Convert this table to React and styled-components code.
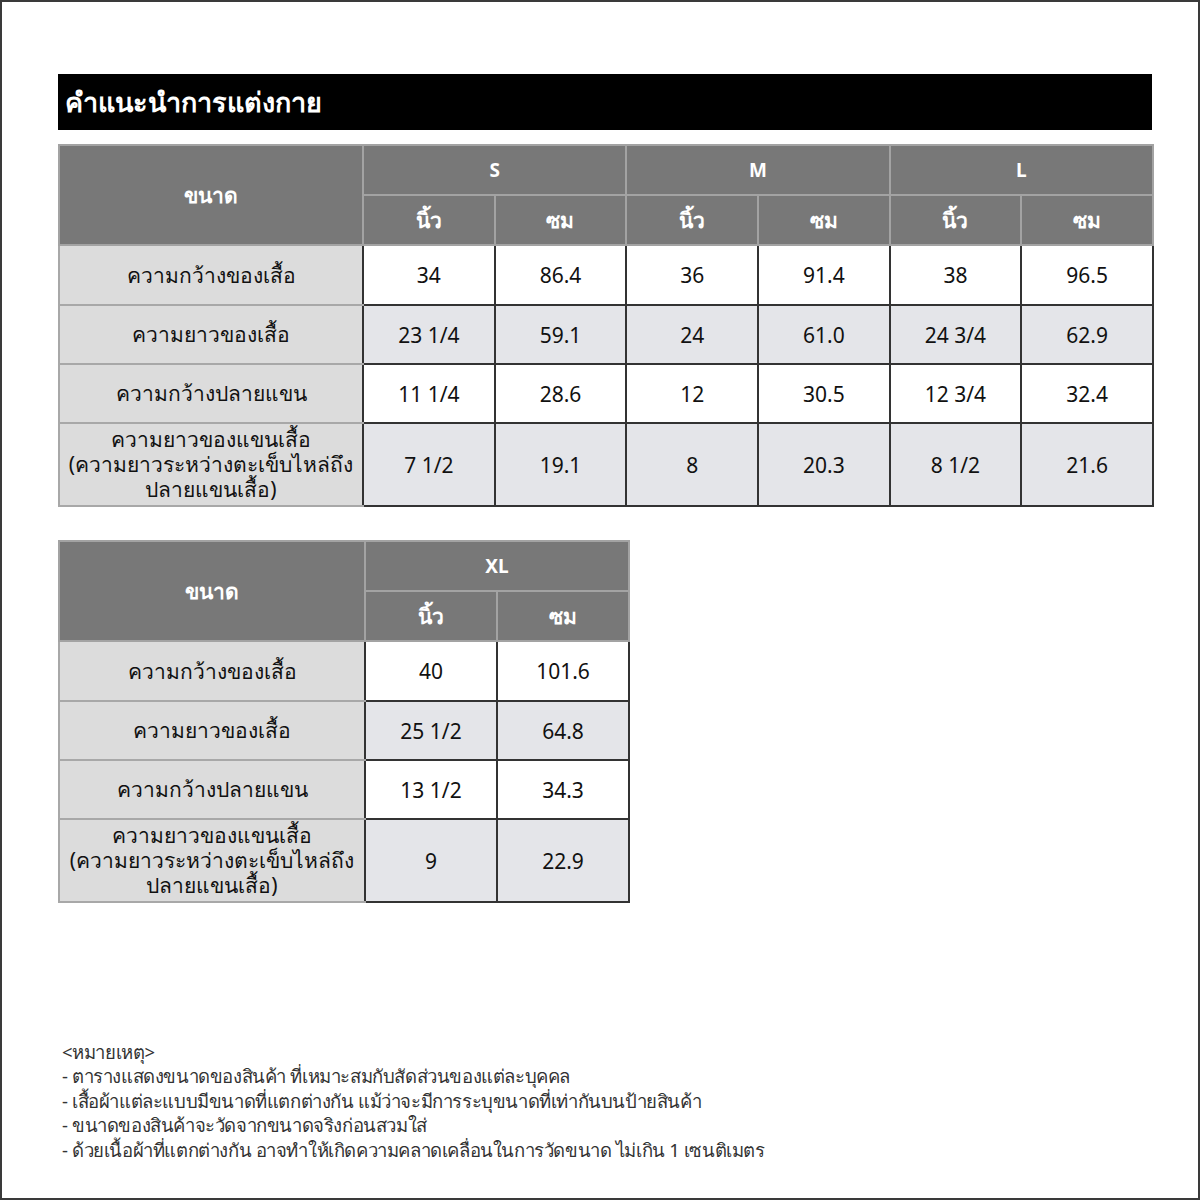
import React from "react";
import styled, { createGlobalStyle } from "styled-components";

const GlobalStyle = createGlobalStyle`
  html, body { margin: 0; padding: 0; background: #fff; }
  body { font-family: "Noto Sans", "DejaVu Sans", sans-serif; color: #111; }
`;

const Page = styled.div`
  width: 1200px;
  height: 1200px;
  box-sizing: border-box;
  border: 2px solid #3a3a3a;
  padding: 72px 46px 0 56px;
  display: flex;
  flex-direction: column;
`;

const TitleBar = styled.div`
  height: 56px;
  background: #000;
  color: #fff;
  font-size: 27px;
  font-weight: 600;
  display: flex;
  align-items: center;
  padding-left: 7px;
  margin-bottom: 14px;
`;

const Table = styled.table`
  border-collapse: collapse;
  table-layout: fixed;
  width: ${(p) => p.$width}px;
  margin-bottom: ${(p) => p.$gap || 0}px;
  border: 2px solid #a8a8a8;
`;

const HeadCell = styled.th`
  background: #787878;
  color: #fff;
  font-weight: 700;
  font-size: ${(p) => (p.$small ? 19 : 21)}px;
  height: ${(p) => p.$h || 50}px;
  padding: 0;
  text-align: center;
  border: 2px solid #a3a3a3;
  box-sizing: border-box;
`;

const LabelCell = styled.td`
  background: #dcdcdc;
  font-size: 21px;
  line-height: 25px;
  text-align: center;
  height: ${(p) => p.$h}px;
  padding: 0 4px;
  border: 2px solid #a8a8a8;
  border-right: 2px solid #333;
  box-sizing: border-box;
  white-space: pre-line;
`;

const DataCell = styled.td`
  background: ${(p) => (p.$alt ? "#e4e5e9" : "#fff")};
  font-size: 21px;
  text-align: center;
  padding: 0;
  border: 2px solid #333;
  box-sizing: border-box;
`;

const Notes = styled.div`
  margin-top: auto;
  margin-bottom: 36px;
  padding-left: 4px;
  font-size: 18.5px;
  line-height: 24.5px;
  color: #333;
  letter-spacing: -0.4px;
`;

const rowLabels = [
  { text: "ความกว้างของเสื้อ", h: 60 },
  { text: "ความยาวของเสื้อ", h: 59 },
  { text: "ความกว้างปลายแขน", h: 59 },
  { text: "ความยาวของแขนเสื้อ\n(ความยาวระหว่างตะเข็บไหล่ถึง\nปลายแขนเสื้อ)", h: 83 },
];

const sizes = {
  S: [["34", "86.4"], ["23 1/4", "59.1"], ["11 1/4", "28.6"], ["7 1/2", "19.1"]],
  M: [["36", "91.4"], ["24", "61.0"], ["12", "30.5"], ["8", "20.3"]],
  L: [["38", "96.5"], ["24 3/4", "62.9"], ["12 3/4", "32.4"], ["8 1/2", "21.6"]],
  XL: [["40", "101.6"], ["25 1/2", "64.8"], ["13 1/2", "34.3"], ["9", "22.9"]],
};

function SizeTable({ keys, width, labelWidth, gap }) {
  const dataWidth = (width - labelWidth) / (keys.length * 2);
  return (
    <Table $width={width} $gap={gap}>
      <colgroup>
        <col style={{ width: labelWidth }} />
        {keys.flatMap((k) => [
          <col key={k + "a"} style={{ width: dataWidth }} />,
          <col key={k + "b"} style={{ width: dataWidth }} />,
        ])}
      </colgroup>
      <thead>
        <tr>
          <HeadCell rowSpan={2} $h={100}>ขนาด</HeadCell>
          {keys.map((k) => (
            <HeadCell key={k} colSpan={2} $small>{k}</HeadCell>
          ))}
        </tr>
        <tr>
          {keys.flatMap((k) => [
            <HeadCell key={k + "in"}>นิ้ว</HeadCell>,
            <HeadCell key={k + "cm"}>ซม</HeadCell>,
          ])}
        </tr>
      </thead>
      <tbody>
        {rowLabels.map((row, i) => (
          <tr key={i}>
            <LabelCell $h={row.h}>{row.text}</LabelCell>
            {keys.flatMap((k) => [
              <DataCell key={k + "in"} $alt={i % 2 === 1}>{sizes[k][i][0]}</DataCell>,
              <DataCell key={k + "cm"} $alt={i % 2 === 1}>{sizes[k][i][1]}</DataCell>,
            ])}
          </tr>
        ))}
      </tbody>
    </Table>
  );
}

export default function App() {
  return (
    <Page>
      <GlobalStyle />
      <TitleBar>คำแนะนำการแต่งกาย</TitleBar>
      <SizeTable keys={["S", "M", "L"]} width={1094} labelWidth={304} gap={33} />
      <SizeTable keys={["XL"]} width={570} labelWidth={306} />
      <Notes>
        <div>&lt;หมายเหตุ&gt;</div>
        <div>- ตารางแสดงขนาดของสินค้า ที่เหมาะสมกับสัดส่วนของแต่ละบุคคล</div>
        <div>- เสื้อผ้าแต่ละแบบมีขนาดที่แตกต่างกัน แม้ว่าจะมีการระบุขนาดที่เท่ากันบนป้ายสินค้า</div>
        <div>- ขนาดของสินค้าจะวัดจากขนาดจริงก่อนสวมใส่</div>
        <div>- ด้วยเนื้อผ้าที่แตกต่างกัน อาจทำให้เกิดความคลาดเคลื่อนในการวัดขนาด ไม่เกิน 1 เซนติเมตร</div>
      </Notes>
    </Page>
  );
}
